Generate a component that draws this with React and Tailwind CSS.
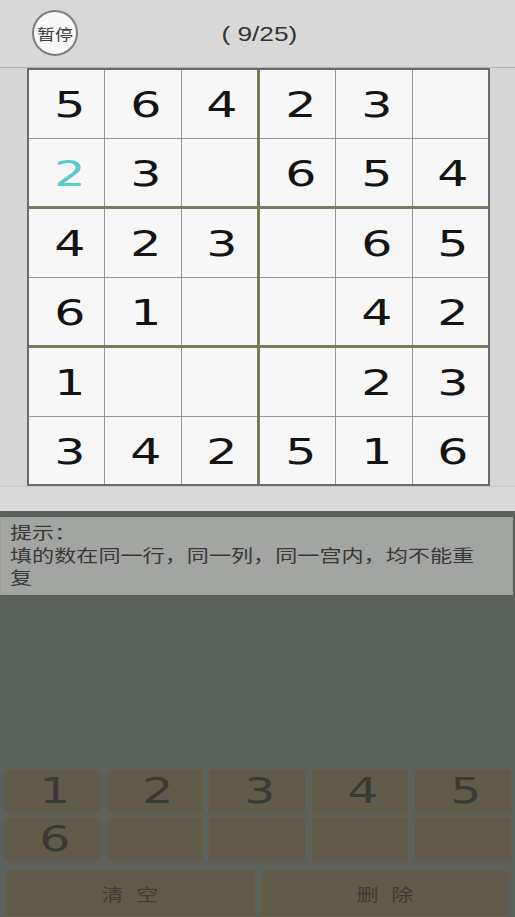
import React from "react";

const board = [
  ["5", "6", "4", "2", "3", ""],
  ["2", "3", "", "6", "5", "4"],
  ["4", "2", "3", "", "6", "5"],
  ["6", "1", "", "", "4", "2"],
  ["1", "", "", "", "2", "3"],
  ["3", "4", "2", "5", "1", "6"],
];

// cells filled in by the player show in teal
const userCells = { "1-0": true };

const digitFont = { fontFamily: '"DejaVu Sans", sans-serif' };
const cjkFont = { fontFamily: '"Noto Sans CJK SC", "Noto Sans", sans-serif' };

const Cell = ({ value, user }) => (
  <div className="bg-[#f7f7f7] flex items-center justify-center">
    <span
      className={`inline-block scale-x-140 text-[35px] leading-none pl-1 mt-1 ${
        user ? "text-[#55cbcb]" : "text-[#141414]"
      }`}
      style={digitFont}
    >
      {value}
    </span>
  </div>
);

const Box = ({ br, bc }) => {
  const cells = [];
  for (let r = 0; r < 2; r++) {
    for (let c = 0; c < 3; c++) {
      const row = br * 2 + r;
      const col = bc * 3 + c;
      cells.push(
        <Cell
          key={`${row}-${col}`}
          value={board[row][col]}
          user={userCells[`${row}-${col}`]}
        />
      );
    }
  }
  return (
    <div className="bg-[#959595] grid grid-cols-3 grid-rows-2 gap-px">
      {cells}
    </div>
  );
};

const App = () => {
  const keys = ["1", "2", "3", "4", "5", "6", "", "", "", ""];

  return (
    <div className="w-[515px] h-[917px] flex flex-col bg-[#5b615c] overflow-hidden">
      {/* ----- header ----- */}
      <div className="h-[68px] shrink-0 bg-[#d8d8d8] border-b border-[#b3b3b3] relative flex items-center justify-center">
        <div className="absolute left-[32px] top-[10px] w-[46px] h-[46px] rounded-full bg-[#f8f8f8] border-2 border-[#7d7d7d] flex items-center justify-center">
          <span
            className="inline-block scale-x-120 text-[15px] text-[#3c3c3c] leading-none"
            style={cjkFont}
          >
            暂停
          </span>
        </div>
        <span
          className="inline-block scale-x-125 text-[21px] text-[#333] leading-none ml-1"
          style={{ fontFamily: '"Liberation Sans", sans-serif' }}
        >
          ( 9/25)
        </span>
      </div>

      {/* ----- board ----- */}
      <div className="bg-[#d6d6d6] shrink-0 pl-[27px]">
        <div className="w-[463px] h-[418px] border-2 border-[#6b6b6b] bg-[#777c5c] grid grid-cols-2 grid-rows-3 gap-[3px]">
          {[0, 1, 2].map((br) =>
            [0, 1].map((bc) => <Box key={`${br}-${bc}`} br={br} bc={bc} />)
          )}
        </div>
      </div>
      <div className="h-[25px] shrink-0 bg-[#dadada] border-t border-[#c8c8c8]" />

      {/* ----- hint ----- */}
      <div className="pt-[6px] pr-[2px] shrink-0">
        <div
          className="h-[78px] bg-[#a3a5a2] border border-[#9a9c99] pl-[9px] pt-[3px] text-[#383838] text-[17px] leading-[22.5px]"
          style={cjkFont}
        >
          <div className="origin-left scale-x-130 w-max">提示：</div>
          <div className="origin-left scale-x-130 w-max">
            填的数在同一行，同一列，同一宫内，均不能重
          </div>
          <div className="origin-left scale-x-130 w-max">复</div>
        </div>
      </div>

      <div className="flex-1" />

      {/* ----- keypad ----- */}
      <div className="shrink-0 px-[3px]">
        <div className="grid grid-cols-5 gap-x-[4px] gap-y-[3px]">
          {keys.map((k, i) => (
            <div
              key={i}
              className="h-[45px] bg-[#615b4c] border border-[#676151] flex items-center justify-center"
            >
              <span
                className="inline-block scale-x-140 text-[35px] leading-none text-[#3a3936] pl-1"
                style={digitFont}
              >
                {k}
              </span>
            </div>
          ))}
        </div>
        <div className="flex gap-[4px] mt-[7px] px-[2px]">
          {["清 空", "删 除"].map((label) => (
            <div
              key={label}
              className="flex-1 h-[48px] bg-[#615b4c] border border-[#676151] flex items-center justify-center"
            >
              <span
                className="inline-block scale-x-130 text-[17px] tracking-[3px] pl-[3px] text-[#3c3b37] leading-none"
                style={cjkFont}
              >
                {label}
              </span>
            </div>
          ))}
        </div>
      </div>
    </div>
  );
};

export default App;
